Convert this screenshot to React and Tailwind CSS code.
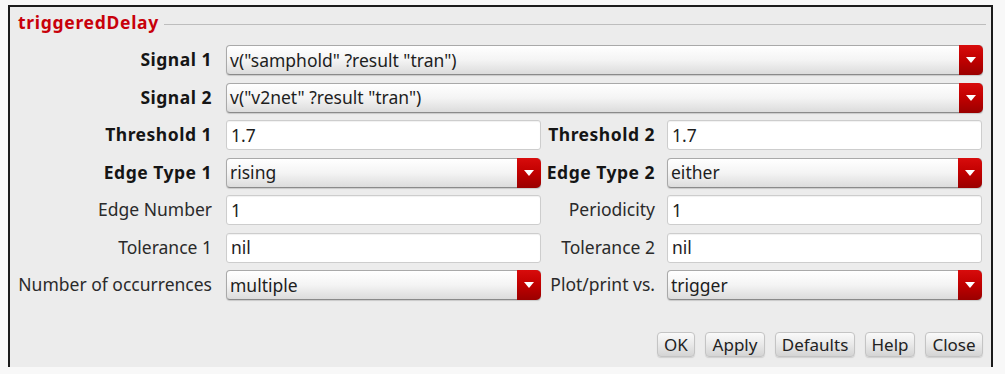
import React from 'react';

const font = { fontFamily: '"Noto Sans", "DejaVu Sans", sans-serif' };

function Label({ children, bold, width }) {
  return (
    <div
      className={`shrink-0 text-right text-[17.5px] leading-none ${bold ? 'font-bold tracking-[0.5px] text-[#151515]' : 'text-[#2a2a2a]'} ${width}`}
    >
      {children}
    </div>
  );
}

function TextField({ value, width }) {
  return (
    <div
      className={`h-[30px] flex items-center pl-[4px] bg-white border border-[#cdcdcd] rounded-[3px] shadow-[inset_0_1px_1px_rgba(0,0,0,0.06)] text-[17.5px] text-[#1e1e1e] ${width}`}
    >
      {value}
    </div>
  );
}

function Combo({ value, width }) {
  return (
    <div
      className={`h-[30px] flex items-stretch rounded-[4px] border border-[#a9a9a9] border-b-[#8a8a8a] bg-gradient-to-b from-white via-[#f4f4f4] to-[#dcdcdc] shadow-[0_1px_1px_rgba(0,0,0,0.15)] ${width}`}
    >
      <div className="flex-1 flex items-center pl-[3px] text-[17.5px] text-[#1e1e1e] whitespace-nowrap">{value}</div>
      <div className="w-[24px] -my-px -mr-px rounded-r-[5px] bg-gradient-to-b from-[#d80c0c] via-[#c00000] to-[#9a0000] flex items-center justify-center">
        <svg width="10" height="6" viewBox="0 0 10 6">
          <path d="M0 0 H10 L5 6 Z" fill="#ffffff" />
        </svg>
      </div>
    </div>
  );
}

function Field({ type, value, width }) {
  return type === 'combo' ? <Combo value={value} width={width} /> : <TextField value={value} width={width} />;
}

function Button({ children, width }) {
  return (
    <div
      className={`h-[25px] flex items-center justify-center rounded-[4px] border border-[#c4c4c4] bg-gradient-to-b from-[#fafafa] via-[#e9e9e9] to-[#d4d4d4] text-[17px] text-[#222] shadow-[0_1px_1px_rgba(0,0,0,0.12)] ${width}`}
    >
      {children}
    </div>
  );
}

const pairs = [
  [
    { label: 'Threshold 1', bold: true, type: 'text', value: '1.7' },
    { label: 'Threshold 2', bold: true, type: 'text', value: '1.7' },
  ],
  [
    { label: 'Edge Type 1', bold: true, type: 'combo', value: 'rising' },
    { label: 'Edge Type 2', bold: true, type: 'combo', value: 'either' },
  ],
  [
    { label: 'Edge Number', type: 'text', value: '1' },
    { label: 'Periodicity', type: 'text', value: '1' },
  ],
  [
    { label: 'Tolerance 1', type: 'text', value: 'nil' },
    { label: 'Tolerance 2', type: 'text', value: 'nil' },
  ],
  [
    { label: 'Number of occurrences', type: 'combo', value: 'multiple' },
    { label: 'Plot/print vs.', type: 'combo', value: 'trigger' },
  ],
];

const buttons = [
  { text: 'OK', width: 'w-[38px]' },
  { text: 'Apply', width: 'w-[60px]' },
  { text: 'Defaults', width: 'w-[80px]' },
  { text: 'Help', width: 'w-[50px]' },
  { text: 'Close', width: 'w-[58px]' },
];

export default function App() {
  return (
    <div className="w-[1005px] h-[374px] bg-[#f8f8f8] pt-[5px] pl-[8px]" style={font}>
      <div className="w-[985px] h-[362px] border-l-2 border-t-2 border-r-2 border-[#1c1c1c] bg-[#ececec]">
        <div className="flex items-center h-[32px] pl-[8px] pr-[5px]">
          <span className="text-[17.5px] font-bold tracking-[0.7px] text-[#c8000a] leading-none">triggeredDelay</span>
          <div className="flex-1 ml-[5px] h-px bg-[#bdbdbd] mt-[3px]" />
        </div>

        <div className="flex flex-col gap-[7.5px] mt-[6px]">
          {['Signal 1', 'Signal 2'].map((l, i) => (
            <div key={l} className="flex items-center">
              <Label bold width="w-[202px]">{l}</Label>
              <div className="ml-[14px]">
                <Combo
                  value={i === 0 ? 'v("samphold" ?result "tran")' : 'v("v2net" ?result "tran")'}
                  width="w-[757px]"
                />
              </div>
            </div>
          ))}
          {pairs.map(([a, b]) => (
            <div key={a.label} className="flex items-center">
              <Label bold={a.bold} width="w-[202px]">{a.label}</Label>
              <div className="ml-[14px]">
                <Field type={a.type} value={a.value} width="w-[315px]" />
              </div>
              <Label bold={b.bold} width="w-[114px]">{b.label}</Label>
              <div className="ml-[12px]">
                <Field type={b.type} value={b.value} width="w-[315px]" />
              </div>
            </div>
          ))}
        </div>

        <div className="flex justify-end gap-[10px] mt-[32px] pr-[8px]">
          {buttons.map(b => (
            <Button key={b.text} width={b.width}>{b.text}</Button>
          ))}
        </div>
      </div>
    </div>
  );
}
